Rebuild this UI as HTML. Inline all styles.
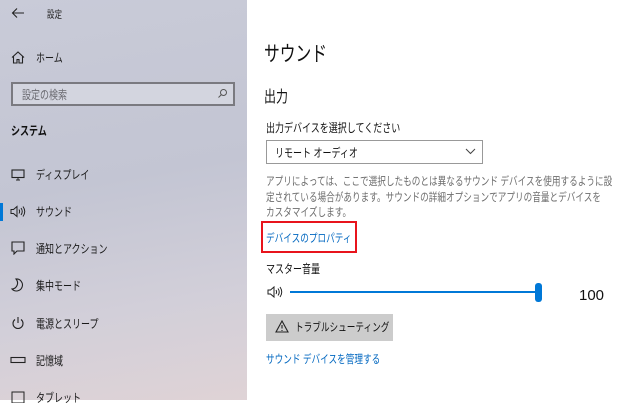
<!DOCTYPE html>
<html><head><meta charset="utf-8"><style>
*{margin:0;padding:0;box-sizing:border-box}
body{width:640px;height:400px;overflow:hidden;position:relative;font-family:"Liberation Sans","Noto Sans CJK JP",sans-serif;background:#fff;color:#000}
.side{position:absolute;left:0;top:0;width:247px;height:400px;background:linear-gradient(170deg,#c9cbd8 0%,#c3c5d3 45%,#d2cfd9 75%,#dfd3d6 100%)}
.t{position:absolute;white-space:nowrap;transform:scaleX(0.75);transform-origin:0 0}
.s{font-size:12px;color:#1a1a1a}
.ic{position:absolute}
</style></head><body>
<div class="side">
<svg class="ic" style="left:11px;top:7px" width="14" height="12" viewBox="0 0 14 12"><path d="M13 6H2M6 1.5L1.5 6 6 10.5" fill="none" stroke="#222" stroke-width="1.1"/></svg>
<div class="t" style="left:47px;top:6px;font-size:10px;color:#222">設定</div>
<svg class="ic" style="left:11px;top:51px" width="14" height="13" viewBox="0 0 14 13"><path d="M1 6.5L7 1l6 5.5M2.5 5v7h3.5V8.5h2V12h3.5V5" fill="none" stroke="#222" stroke-width="1.1"/></svg>
<div class="t s" style="left:36px;top:49px">ホーム</div>
<div style="position:absolute;left:11px;top:82px;width:224px;height:24px;border:2px solid #7a7a80;background:#d3d5df"></div>
<div class="t" style="left:22px;top:86px;font-size:12px;color:#6a6a70">設定の検索</div>
<svg class="ic" style="left:217px;top:88px" width="11" height="11" viewBox="0 0 11 11"><circle cx="6.5" cy="4.5" r="3" fill="none" stroke="#555"/><path d="M4.5 6.5L1.5 9.5" stroke="#555"/></svg>
<div class="t" style="left:11px;top:122px;font-size:12px;font-weight:bold;color:#111">システム</div>
<svg class="ic" style="left:11px;top:169px" width="14" height="12" viewBox="0 0 14 12"><rect x="1" y="1" width="12" height="7.5" fill="none" stroke="#222" stroke-width="1.1"/><path d="M5 11h4M7 8.5v2.5" stroke="#222"/></svg>
<div class="t s" style="left:36px;top:166px">ディスプレイ</div>
<div style="position:absolute;left:0;top:203px;width:3px;height:18px;background:#0078d7"></div>
<svg class="ic" style="left:10px;top:205px" width="16" height="13" viewBox="0 0 16 13"><path d="M1 4.5h2.5L7 1.5v10L3.5 8.5H1z" fill="none" stroke="#222"/><path d="M9 4.5q1.2 2-0 4M11 3q2.5 3.5 0 7M13 1.5q3.5 5 0 10" fill="none" stroke="#222"/></svg>
<div class="t s" style="left:36px;top:203px">サウンド</div>
<svg class="ic" style="left:11px;top:241px" width="14" height="14" viewBox="0 0 14 14"><path d="M1 1h12v9H6l-3 3v-3H1z" fill="none" stroke="#222" stroke-width="1.1"/></svg>
<div class="t s" style="left:36px;top:240px">通知とアクション</div>
<svg class="ic" style="left:11px;top:278px" width="14" height="14" viewBox="0 0 14 14"><path d="M5 1a6 6 0 1 1-4 10 6 6 0 0 0 4-10z" fill="none" stroke="#222" stroke-width="1.1"/></svg>
<div class="t s" style="left:36px;top:277px">集中モード</div>
<svg class="ic" style="left:11px;top:316px" width="14" height="14" viewBox="0 0 14 14"><path d="M4 3.5a5 5 0 1 0 6 0M7 1v6" fill="none" stroke="#222" stroke-width="1.1"/></svg>
<div class="t s" style="left:36px;top:315px">電源とスリープ</div>
<svg class="ic" style="left:10px;top:356px" width="16" height="8" viewBox="0 0 16 8"><rect x="1" y="1.5" width="14" height="5" fill="none" stroke="#222" stroke-width="1.1"/></svg>
<div class="t s" style="left:36px;top:352px">記憶域</div>
<svg class="ic" style="left:11px;top:391px" width="14" height="12" viewBox="0 0 14 12"><rect x="1" y="1" width="12" height="11" fill="none" stroke="#222"/></svg>
<div class="t s" style="left:36px;top:389px">タブレット</div>
</div>

<div class="t" style="left:264px;top:38px;font-size:21px;color:#111">サウンド</div>
<div class="t" style="left:264px;top:83px;font-size:16px;color:#111">出力</div>
<div class="t" style="left:266px;top:119px;font-size:12px;color:#111">出力デバイスを選択してください</div>
<div style="position:absolute;left:266px;top:140px;width:217px;height:24px;border:1px solid #999;background:#fff"></div>
<div class="t" style="left:275px;top:144px;font-size:12px;color:#111">リモート オーディオ</div>
<svg class="ic" style="left:465px;top:148px" width="11" height="7" viewBox="0 0 11 7"><path d="M1 1l4.5 4.5L10 1" fill="none" stroke="#444"/></svg>
<div class="t" style="left:266px;top:175px;font-size:11.5px;line-height:15.5px;color:#6d6d6d">アプリによっては、ここで選択したものとは異なるサウンド デバイスを使用するように設<br>定されている場合があります。サウンドの詳細オプションでアプリの音量とデバイスを<br>カスタマイズします。</div>
<div style="position:absolute;left:261px;top:221px;width:96px;height:32px;border:2px solid #e8141c"></div>
<div class="t" style="left:266px;top:230px;font-size:11.5px;color:#0067c0">デバイスのプロパティ</div>
<div class="t" style="left:266px;top:260px;font-size:12px;color:#111">マスター音量</div>
<svg class="ic" style="left:267px;top:285px" width="18" height="14" viewBox="0 0 18 14"><path d="M1 5h2.5L7 2v10L3.5 9H1z" fill="none" stroke="#222"/><path d="M9 5q1.2 2 0 4M11 3.5q2.5 3.5 0 7M13 2q3.5 5 0 10" fill="none" stroke="#222"/></svg>
<div style="position:absolute;left:290px;top:291px;width:248px;height:2px;background:#0078d7"></div>
<div style="position:absolute;left:535px;top:283px;width:7px;height:19px;border-radius:3px;background:#0078d7"></div>
<div style="position:absolute;left:579px;top:287px;font-size:15px;color:#111">100</div>
<div style="position:absolute;left:266px;top:314px;width:127px;height:27px;background:#cccccc"></div>
<svg class="ic" style="left:275px;top:320px" width="14" height="13" viewBox="0 0 14 13"><path d="M7 1L1 12h12z M7 5v3.5M7 10v1" fill="none" stroke="#222" stroke-width="1.1"/></svg>
<div class="t" style="left:295px;top:319px;font-size:11.5px;color:#111">トラブルシューティング</div>
<div class="t" style="left:266px;top:351px;font-size:11.5px;color:#0067c0">サウンド デバイスを管理する</div>
</body></html>
